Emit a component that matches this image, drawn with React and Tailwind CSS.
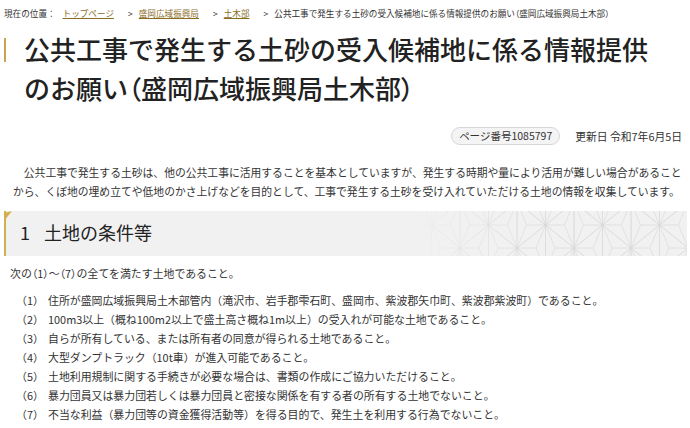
import React from 'react';

const crumbs = ['トップページ', '盛岡広域振興局', '土木部'];

const conditions = [
  '住所が盛岡広域振興局土木部管内（滝沢市、岩手郡雫石町、盛岡市、紫波郡矢巾町、紫波郡紫波町）であること。',
  '100m3以上（概ね100m2以上で盛土高さ概ね1m以上）の受入れが可能な土地であること。',
  '自らが所有している、または所有者の同意が得られる土地であること。',
  '大型ダンプトラック（10t車）が進入可能であること。',
  '土地利用規制に関する手続きが必要な場合は、書類の作成にご協力いただけること。',
  '暴力団員又は暴力団若しくは暴力団員と密接な関係を有する者の所有する土地でないこと。',
  '不当な利益（暴力団等の資金獲得活動等）を得る目的で、発生土を利用する行為でないこと。',
];

// full-width brackets are set proportionally, as on the original page
const Jp = ({ children }) =>
  children.split(/([（）])/).map((part, i) =>
    part === '（' || part === '）' ? (
      <span key={i} className="[font-feature-settings:'palt']">
        {part}
      </span>
    ) : (
      part
    )
  );

// asanoha (hemp leaf) lines for the heading background
const off = (i) => ((((i % 2) + 2) % 2) === 0 ? 37 : 14);
const P = (i, j) => [43 + 28.5 * i, off(i) + 46 * j];
const buildAsanoha = () => {
  let d = '';
  const dots = [];
  for (let i = -2; i < 10; i++) {
    for (let j = -2; j < 2; j++) {
      dots.push(P(i, j));
      for (const [c, e] of [[i, i + 1], [i + 1, i]]) {
        const a = P(c, j);
        const b = P(c, j + 1);
        const k = ((a[1] + b[1]) / 2 - off(e)) / 46;
        const t = P(e, k);
        const cx = (a[0] + b[0] + t[0]) / 3;
        const cy = (a[1] + b[1] + t[1]) / 3;
        d += `M${a[0]} ${a[1]}L${b[0]} ${b[1]}L${t[0]} ${t[1]}Z`;
        [a, b, t].forEach((v) => {
          d += `M${cx} ${cy}L${v[0]} ${v[1]}`;
        });
      }
    }
  }
  return { d, dots };
};
const asanoha = buildAsanoha();

const Asanoha = () => (
  <svg width="275" height="45" viewBox="-5 0 275 45" className="absolute right-0 top-0">
    <defs>
      <linearGradient id="fade" x1="0" x2="1" y1="0" y2="0">
        <stop offset="0" stopColor="#fff" stopOpacity="0" />
        <stop offset="0.45" stopColor="#fff" stopOpacity="1" />
      </linearGradient>
      <mask id="fadeMask">
        <rect x="-5" width="275" height="45" fill="url(#fade)" />
      </mask>
    </defs>
    <g mask="url(#fadeMask)">
      <path d={asanoha.d} stroke="#dddddd" strokeWidth="0.8" fill="none" />
      {asanoha.dots.map(([x, y], n) => (
        <circle key={n} cx={x} cy={y} r="1.3" fill="#d6d6d6" />
      ))}
    </g>
  </svg>
);

const App = () => {
  return (
    <div className="w-[690px] h-[428px] overflow-hidden bg-white text-[#333] font-['Noto_Sans_CJK_JP','Noto_Sans',sans-serif]">
      {/* Breadcrumb */}
      <div className="flex items-center pt-[6px] pl-[4px] text-[8.6px] leading-[14px] text-[#333] whitespace-nowrap">
        <span>現在の位置：</span>
        {crumbs.map((c, i) => (
          <React.Fragment key={c}>
            {i > 0 && <span className="ml-[14px] mr-[6px]">&gt;</span>}
            <a href="#" className={`text-[#8a6d1f] underline ${i === 0 ? 'ml-[7px]' : ''}`}>
              {c}
            </a>
          </React.Fragment>
        ))}
        <span className="ml-[14px] mr-[6px]">&gt;</span>
        <span>
          <Jp>公共工事で発生する土砂の受入候補地に係る情報提供のお願い（盛岡広域振興局土木部）</Jp>
        </span>
      </div>

      {/* Title */}
      <h1 className="flex items-start mt-[8.5px] pl-[4px]">
        <span className="w-[2px] h-[24px] mt-[9.5px] bg-[#c9a552] shrink-0" />
        <span className="ml-[18px] w-[640px] text-[26px] leading-[39px] font-medium text-[#222]">
          <Jp>{'公共工事で発生する土砂の受入候補地に係る情報提供'}</Jp>
          <Jp>{'のお願い（盛岡広域振興局土木部）'}</Jp>
        </span>
      </h1>

      {/* Meta */}
      <div className="flex items-center justify-end mt-[20.5px] pr-[8px] h-[18px]">
        <span className="h-[18px] px-[7px] flex items-center rounded-full border border-[#d6d6d6] bg-[#f4f4f4] text-[10.5px] text-[#333]">
          ページ番号1085797
        </span>
        <span className="ml-[15px] text-[10.8px] text-[#333]">更新日 令和7年6月5日</span>
      </div>

      {/* Lead paragraph */}
      <p className="mt-[17.5px] pl-[13px] pr-[2px] text-[10.8px] leading-[19px] indent-[1em]">
        公共工事で発生する土砂は、他の公共工事に活用することを基本としていますが、発生する時期や量により活用が難しい場合があることから、くぼ地の埋め立てや低地のかさ上げなどを目的として、工事で発生する土砂を受け入れていただける土地の情報を収集しています。
      </p>

      {/* Section heading */}
      <h2 className="relative mt-[10.5px] ml-[4px] mr-[3px] h-[45px] bg-[#f1f1f1] border-l-2 border-[#d0ae52] overflow-hidden">
        <Asanoha />
        <svg width="9" height="10" viewBox="0 0 9 10" className="absolute -left-[2px] top-0">
          <polygon points="0,10 0,2 8,0" fill="#d4b04a" />
        </svg>
        <span className="relative flex items-center pt-[9px] pl-[14px] text-[18px] leading-[24px] text-[#222]">
          <span>1</span>
          <span className="ml-[14px]">土地の条件等</span>
        </span>
      </h2>

      {/* Conditions */}
      <p className="mt-[7.5px] pl-[10px] text-[10.9px] leading-[19px]">
        <Jp>次の（1）～（7）の全てを満たす土地であること。</Jp>
      </p>
      <ol className="mt-[8px] pl-[16px]">
        {conditions.map((text, i) => (
          <li key={i} className="flex text-[10.9px] leading-[19px] whitespace-nowrap">
            <span className="w-[32px] shrink-0">（{i + 1}）</span>
            <span>{text}</span>
          </li>
        ))}
      </ol>
    </div>
  );
};

export default App;
